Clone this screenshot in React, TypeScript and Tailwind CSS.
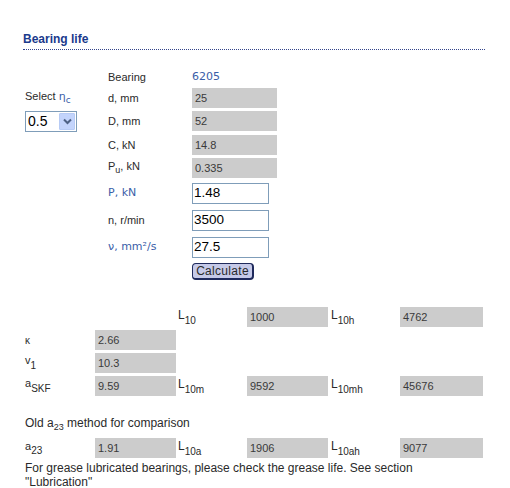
import React from "react";

const sans = "font-['Liberation_Sans',Arial,sans-serif]";
const verd = "font-['DejaVu_Sans',Verdana,sans-serif]";

function Box({ children, w = "w-[85px]" }: { children: React.ReactNode; w?: string }) {
  return (
    <div className={`${w} h-[20px] bg-[#cccccc] flex items-center pl-[3px] text-[11px] text-[#3a3a3a]`}>
      {children}
    </div>
  );
}

function Input({ value }: { value: string }) {
  return (
    <div className="w-[77px] h-[21px] border border-[#7f9db9] bg-white flex items-center pl-[1px] text-[13.5px] text-black">
      {value}
    </div>
  );
}

function L({ sub }: { sub: string }) {
  return (
    <span className="text-[12px] text-[#2a2a2a] leading-none relative -top-[3px]">
      L<span className="text-[10px] relative top-[5px]">{sub}</span>
    </span>
  );
}

function ResRow({
  label,
  v1,
  l2,
  v2,
  l3,
  v3,
}: {
  label?: React.ReactNode;
  v1?: string;
  l2?: string;
  v2?: string;
  l3?: string;
  v3?: string;
}) {
  return (
    <div className="flex items-center h-[20px]">
      <div className="w-[70px] text-[11px] text-[#2a2a2a]">{label}</div>
      <div className="w-[81px]">{v1 !== undefined ? <Box w="w-[81px]">{v1}</Box> : null}</div>
      <div className="w-[71px] pl-[2px]">{l2 ? <L sub={l2} /> : null}</div>
      <div className="w-[81px]">{v2 !== undefined ? <Box w="w-[81px]">{v2}</Box> : null}</div>
      <div className="w-[72px] pl-[3px]">{l3 ? <L sub={l3} /> : null}</div>
      <div className="w-[83px]">{v3 !== undefined ? <Box w="w-[83px]">{v3}</Box> : null}</div>
    </div>
  );
}

export default function App() {
  return (
    <div className={`${sans} w-[510px] h-[488px] bg-white pt-[31px] pl-[23px] overflow-hidden`}>
      <div className="w-[462px] h-[19px] border-b border-dotted border-[#33448a]">
        <div className="text-[12px] leading-[16px] font-bold text-[#1a3a8c]">Bearing life</div>
      </div>

      <div className="ml-[2px] mt-[17px]">
        {/* Bearing */}
        <div className="flex items-center h-[20px]">
          <div className="w-[83px]" />
          <div className="w-[84px] text-[11px] text-[#2a2a2a]">Bearing</div>
          <div className={`${verd} text-[11px] text-[#3a5ea8]`}>6205</div>
        </div>
        {/* d */}
        <div className="flex items-center h-[20px] mt-[1px]">
          <div className="w-[83px] text-[11px] text-[#2a2a2a] -mt-[3px]">
            Select <span className={`${verd} text-[#3a5ea8]`}>η<span className="text-[9px] relative top-[3px]">c</span></span>
          </div>
          <div className="w-[84px] text-[11px] text-[#2a2a2a]">d, mm</div>
          <Box>25</Box>
        </div>
        {/* D */}
        <div className="flex items-center h-[20px] mt-[3px]">
          <div className="w-[83px] h-[20px]">
            <div className="w-[52px] h-[21px] border border-[#7f9db9] bg-white flex items-center justify-between">
              <span className="text-[14px] text-black pl-[2px]">0.5</span>
              <div className="w-[16px] h-[17px] mr-[1px] bg-[#c3d4fc] border border-[#b7cbf5] flex items-center justify-center rounded-[1px]">
                <svg width="9" height="7" viewBox="0 0 9 7">
                  <polyline points="1,1.5 4.5,5 8,1.5" fill="none" stroke="#4d6185" strokeWidth="2" />
                </svg>
              </div>
            </div>
          </div>
          <div className="w-[84px] text-[11px] text-[#2a2a2a]">D, mm</div>
          <Box>52</Box>
        </div>
        {/* C */}
        <div className="flex items-center h-[20px] mt-[4px]">
          <div className="w-[83px]" />
          <div className="w-[84px] text-[11px] text-[#2a2a2a]">C, kN</div>
          <Box>14.8</Box>
        </div>
        {/* Pu */}
        <div className="flex items-center h-[20px] mt-[3px]">
          <div className="w-[83px]" />
          <div className="w-[84px] text-[11px] text-[#2a2a2a] -mt-[3px]">
            P<span className="text-[9px] relative top-[3px]">u</span>, kN
          </div>
          <Box>0.335</Box>
        </div>
        {/* P */}
        <div className="flex items-center h-[21px] mt-[5px]">
          <div className="w-[83px]" />
          <div className={`${verd} w-[84px] text-[11px] text-[#3a5ea8]`}>P, kN</div>
          <Input value="1.48" />
        </div>
        {/* n */}
        <div className="flex items-center h-[21px] mt-[6px]">
          <div className="w-[83px]" />
          <div className="w-[84px] text-[11px] text-[#2a2a2a]">n, r/min</div>
          <Input value="3500" />
        </div>
        {/* v */}
        <div className="flex items-center h-[21px] mt-[6px]">
          <div className="w-[83px]" />
          <div className={`${verd} w-[84px] text-[11px] text-[#3a5ea8]`}>ν, mm²/s</div>
          <Input value="27.5" />
        </div>
        {/* Calculate */}
        <div className="flex items-center h-[17px] mt-[5px]">
          <div className="w-[167px]" />
          <div className="w-[62px] h-[17px] rounded-[4px] border border-[#1f2a5c] border-r-2 border-b-2 bg-[#c6cae8] flex items-center justify-center text-[12px] text-[#2a2a2a] tracking-[0.3px]">
            Calculate
          </div>
        </div>

        {/* Results */}
        <div className="mt-[27px] flex flex-col gap-[3px]">
          <ResRow l2="10" v2="1000" l3="10h" v3="4762" />
          <ResRow label={<span className="text-[10px]">κ</span>} v1="2.66" />
          <ResRow
            label={
              <span className="relative -top-[3px]">
                v<span className="text-[10px] relative top-[5px]">1</span>
              </span>
            }
            v1="10.3"
          />
          <ResRow
            label={
              <span className="relative -top-[3px]">
                a<span className="text-[10px] relative top-[5px]">SKF</span>
              </span>
            }
            v1="9.59"
            l2="10m"
            v2="9592"
            l3="10mh"
            v3="45676"
          />
        </div>

        <div className="mt-[19px] h-[16px] text-[12px] leading-[16px] text-[#2a2a2a]">
          Old a<span className="text-[9px] relative top-[3px]">23</span> method for comparison
        </div>

        <div className="mt-[7px]">
          <ResRow
            label={
              <span className="relative -top-[2px]">
                a<span className="text-[10px] relative top-[4px]">23</span>
              </span>
            }
            v1="1.91"
            l2="10a"
            v2="1906"
            l3="10ah"
            v3="9077"
          />
        </div>

        <div className="mt-[3px] text-[12px] leading-[14px] text-[#2a2a2a] w-[440px]">
          For grease lubricated bearings, please check the grease life. See section "Lubrication"
        </div>
      </div>
    </div>
  );
}
